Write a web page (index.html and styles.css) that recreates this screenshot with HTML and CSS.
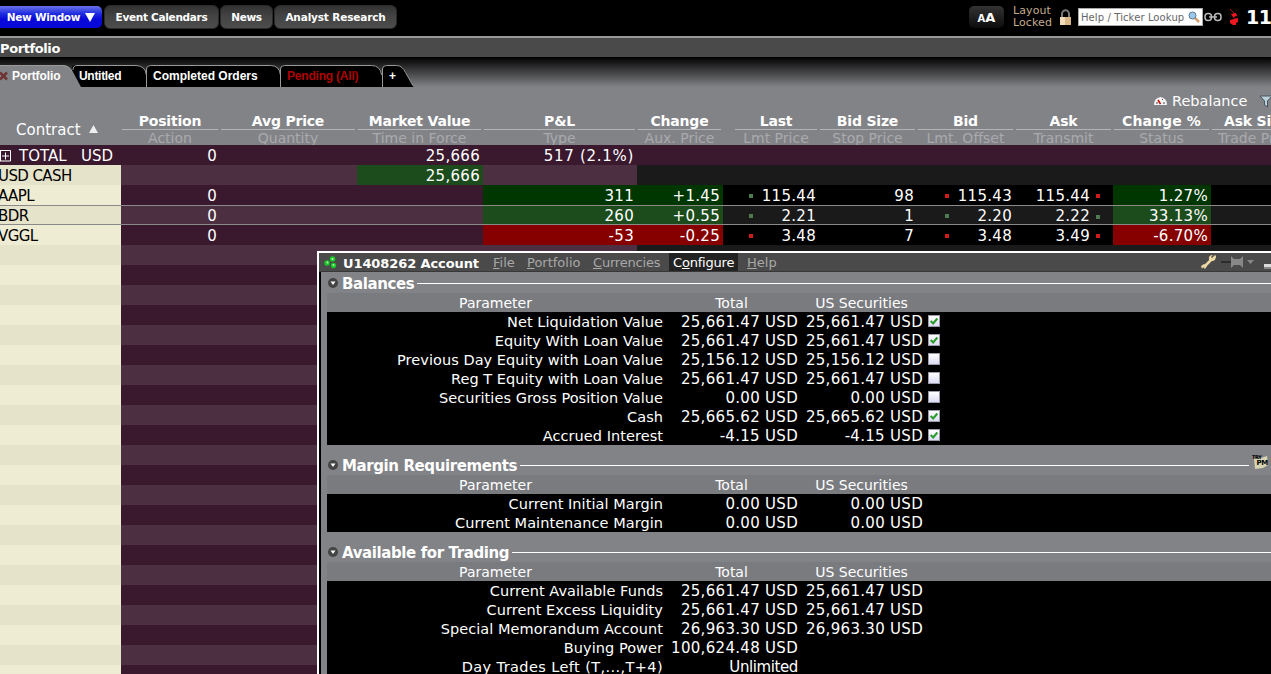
FILE: index.html
```html
<!DOCTYPE html>
<html lang="en">
<head>
    <meta charset="UTF-8">
    <title>Portfolio</title>
    <link rel="stylesheet" href="styles.css">
</head>
<body>
    <header class="toolbar">
        <div class="btn new-window">New Window
            <svg width="10" height="9" viewBox="0 0 10 9"><path d="M0 0h10L5 9z" fill="#fff"/></svg>
        </div>
        <div class="btn calendars">Event Calendars</div>
        <div class="btn news">News</div>
        <div class="btn research">Analyst Research</div>
        <div class="tools">
            <div class="font-size"><small>A</small>A</div>
            <div class="layout">Layout<br>Locked</div>
            <svg class="lock" width="13" height="17" viewBox="0 0 13 17">
                <path d="M3 9V5a3.5 3.8 0 0 1 7 0v4" fill="none" stroke="#777" stroke-width="2"/>
                <path d="M1 8h11v8H1z" fill="#d9b888"/><path d="M1 8h5v8H1z" fill="#f0dcb8"/>
            </svg>
            <div class="search"><span>Help / Ticker Lookup</span>
                <svg width="12" height="12" viewBox="0 0 12 12">
                    <path d="M6 6l5 5" stroke="#d8a070" stroke-width="2.5"/>
                    <circle cx="4.5" cy="4.5" r="3.5" fill="#9cc8ec" stroke="#5a7a96"/>
                </svg>
            </div>
            <svg class="chain" width="18" height="10" viewBox="0 0 18 10">
                <g fill="none" stroke="#bbb" stroke-width="1.5"><rect x="1" y="1.5" width="6.5" height="7" rx="3"/><rect x="10.5" y="1.5" width="6.5" height="7" rx="3"/><path d="M5 5h8"/></g>
            </svg>
            <svg class="phone" width="11" height="19" viewBox="0 0 11 19">
                <path d="M1 1l6 6-3 2 4 3" fill="none" stroke="#a01010"/>
                <path d="M2 6l5-1 1 3-4 1zM1 12l8-2v4l-2 1v2l-3 0-3-2z" fill="#f01820"/>
            </svg>
            <div class="clock">11</div>
        </div>
    </header>

    <div class="title">Portfolio</div>

    <nav class="tabs">
        <svg class="tab-shapes" width="416" height="22" viewBox="0 0 416 22">
            <path d="M383 22V3q0-3 3-3h11q6 1 9 8l8 14z"/>
            <path d="M281 22V3q0-3 3-3h88q9 0 10 10v12z"/>
            <path d="M147 22V3q0-3 3-3h120q9 0 10 10v12z"/>
            <path d="M72 22V3q0-3 3-3h61q9 0 10 10v12z"/>
            <path class="edge" d="M73 5q0-4.500 4-4.500h59q9 0 10.500 9.500M146.500 22V4q0-3.500 4-3.500h120q9 0 10 9.500M280.500 22V4q0-3.500 4-3.500h87q9 0 10 9.500M382.500 22V4q0-3.500 4-3.500h10q6 0 9 7l8 14"/>
            <path class="active" d="M0 0h64q6 1 9 7l8 15H0z"/>
            <path class="edge" d="M0 .5h64q5 .5 8 6"/>
            <path d="M0 7.500l7 7M7 7.500l-7 7" stroke="#6e3434" stroke-width="2.500"/>
        </svg>
        <span class="tab tab-portfolio">Portfolio</span>
        <span class="tab tab-untitled">Untitled</span>
        <span class="tab tab-completed">Completed Orders</span>
        <span class="tab tab-pending">Pending (All)</span>
        <span class="tab tab-add">+</span>
    </nav>

    <div class="actions">
        <svg width="13" height="8" viewBox="0 0 13 8"><path d="M0 8q0-7 6.500-8Q13 1 13 8z" fill="#f4f4f4"/><path d="M6.500 7L4 3" stroke="#c00" stroke-width="1.500"/><path d="M2 6h2M9 6h2M8 2l1 1" stroke="#444"/></svg>
        <span>Rebalance</span>
        <svg class="filter" width="14" height="13" viewBox="0 0 14 13"><path d="M1 1h12L8.500 6v6l-3-2V6z" fill="#bcd0dc" stroke="#46525c"/></svg>
    </div>

    <table class="quotes">
        <colgroup>
            <col class="w121"><col class="w99"><col class="w137"><col class="w126"><col class="w154"><col class="w86"><col class="w11"><col class="w85">
            <col class="w98"><col class="w98"><col class="w98"><col class="w98"><col class="w98">
        </colgroup>
        <thead>
            <tr>
                <th class="contract">Contract <svg width="9" height="8" viewBox="0 0 9 8"><path d="M4.500 0L9 8H0z" fill="#eee"/></svg></th>
                <th><b>Position</b><i>Action</i></th>
                <th><b>Avg Price</b><i>Quantity</i></th>
                <th><b>Market Value</b><i>Time in Force</i></th>
                <th><b>P&amp;L</b><i>Type</i></th>
                <th><b>Change</b><i>Aux. Price</i></th>
                <th></th>
                <th><b>Last</b><i>Lmt Price</i></th>
                <th><b>Bid Size</b><i>Stop Price</i></th>
                <th><b>Bid</b><i>Lmt. Offset</i></th>
                <th><b>Ask</b><i>Transmit</i></th>
                <th class="change-pct"><b>Change %</b><i>Status</i></th>
                <th class="ask-size"><b>Ask Size</b><i>Trade Price</i></th>
            </tr>
        </thead>
        <tbody>
            <tr class="total">
                <td class="name"><svg width="12" height="12" viewBox="0 0 12 12"><path d="M0 .5h10.500v10.500H0M.5 0v11M2 6h7M5.500 2.500v7" fill="none" stroke="#fff"/></svg><span>TOTAL</span><span>USD</span></td>
                <td>0</td><td></td><td>25,666</td><td class="sum">517 (2.1%)</td><td></td><td></td><td></td><td></td><td></td><td></td><td></td><td></td>
            </tr>
            <tr class="even">
                <td class="name">USD CASH</td>
                <td></td><td></td><td class="up">25,666</td><td></td><td></td><td></td><td></td><td></td><td></td><td></td><td></td><td></td>
            </tr>
            <tr class="odd">
                <td class="name">AAPL</td>
                <td>0</td><td></td><td></td><td class="up">311</td><td class="up">+1.45</td><td></td>
                <td class="last"><s class="g"></s>115.44</td><td>98</td><td class="bid"><s class="r"></s>115.43</td><td class="ask">115.44<s class="r"></s></td><td class="up">1.27%</td><td></td>
            </tr>
            <tr class="even selected">
                <td class="name">BDR</td>
                <td>0</td><td></td><td></td><td class="up">260</td><td class="up">+0.55</td><td></td>
                <td class="last"><s class="g"></s>2.21</td><td>1</td><td class="bid"><s class="g"></s>2.20</td><td class="ask">2.22<s class="g"></s></td><td class="up">33.13%</td><td></td>
            </tr>
            <tr class="odd">
                <td class="name">VGGL</td>
                <td>0</td><td></td><td></td><td class="down">-53</td><td class="down">-0.25</td><td></td>
                <td class="last"><s class="r"></s>3.48</td><td>7</td><td class="bid"><s class="r"></s>3.48</td><td class="ask">3.49<s class="r"></s></td><td class="down">-6.70%</td><td></td>
            </tr>
        </tbody>
    </table>

    <div class="empty-rows">
        <div class="stripes-name"></div>
        <div class="stripes-position"></div>
        <div class="stripes-market"></div>
    </div>

    <section class="account">
        <div class="menubar">
            <svg class="logo" width="13" height="13" viewBox="0 0 13 13"><g fill="#18c828"><circle cx="3" cy="7" r="2.700"/><circle cx="8.500" cy="3" r="2.800"/><circle cx="9.500" cy="9.500" r="2.700"/></g><g fill="#b8f8b0"><circle cx="3.500" cy="6.500" r="1"/><circle cx="8.500" cy="3" r="1"/><circle cx="9.500" cy="9" r="1"/></g></svg>
            <strong>U1408262 Account</strong>
            <span class="menu file"><u>F</u>ile</span>
            <span class="menu portfolio"><u>P</u>ortfolio</span>
            <span class="menu currencies"><u>C</u>urrencies</span>
            <span class="menu configure">C<u>o</u>nfigure</span>
            <span class="menu help"><u>H</u>elp</span>
            <svg class="window-icons" width="72" height="16" viewBox="0 0 72 16">
                <path d="M3 13l8-8" stroke="#ecd9a4" stroke-width="2.500"/>
                <path d="M14 1l-3 3-1-1 2-2q-5 0-4 5l3 1q4 0 4-5zM0 12l3-2 3 2-2 3-2-2-1 2z" fill="#ecd9a4"/>
                <path d="M20 8h10" stroke="#2c2c2c" stroke-width="2"/>
                <path d="M30 2l3 3h6l3-3v12l-3-3h-6l-3 3z" fill="#888"/>
                <path d="M46 6h7l-3.500 4z" fill="#888"/>
                <path d="M63 10h9v4h-9z" fill="#ddd"/><path d="M63 13h9v2h-9z" fill="#888"/>
            </svg>
        </div>

        <div class="content">
            <h2><svg width="10" height="10" viewBox="0 0 10 10"><circle cx="5" cy="5" r="5" fill="#444"/><path d="M2.500 3.500h5L5 7z" fill="#fff"/></svg><span>Balances</span></h2>
            <table class="values">
                <tr><th class="w337">Parameter</th><th class="w135">Total</th><th class="w125">US Securities</th><th></th></tr>
                <tr><td class="label">Net Liquidation Value</td><td>25,661.47 USD</td><td>25,661.47 USD</td><td class="check"><svg class="on" viewBox="0 0 12 12"><path d="M2 6l3 3 5-6"/></svg></td></tr>
                <tr><td class="label">Equity With Loan Value</td><td>25,661.47 USD</td><td>25,661.47 USD</td><td class="check"><svg class="on" viewBox="0 0 12 12"><path d="M2 6l3 3 5-6"/></svg></td></tr>
                <tr><td class="label">Previous Day Equity with Loan Value</td><td>25,156.12 USD</td><td>25,156.12 USD</td><td class="check"><svg viewBox="0 0 12 12"></svg></td></tr>
                <tr><td class="label">Reg T Equity with Loan Value</td><td>25,661.47 USD</td><td>25,661.47 USD</td><td class="check"><svg viewBox="0 0 12 12"></svg></td></tr>
                <tr><td class="label">Securities Gross Position Value</td><td>0.00 USD</td><td>0.00 USD</td><td class="check"><svg viewBox="0 0 12 12"></svg></td></tr>
                <tr><td class="label">Cash</td><td>25,665.62 USD</td><td>25,665.62 USD</td><td class="check"><svg class="on" viewBox="0 0 12 12"><path d="M2 6l3 3 5-6"/></svg></td></tr>
                <tr><td class="label">Accrued Interest</td><td>-4.15 USD</td><td>-4.15 USD</td><td class="check"><svg class="on" viewBox="0 0 12 12"><path d="M2 6l3 3 5-6"/></svg></td></tr>
            </table>

            <h2 class="margin-req"><svg width="10" height="10" viewBox="0 0 10 10"><circle cx="5" cy="5" r="5" fill="#444"/><path d="M2.500 3.500h5L5 7z" fill="#fff"/></svg><span>Margin Requirements</span>
                <em class="try-pm"><svg width="17" height="16" viewBox="0 0 17 16"><path d="M2 4l4 1 9-3 1 9-5 3-8 1z" fill="#d8d3b0"/><text x="0" y="4.500" class="try">TRY</text><text x="4.500" y="11" class="pm">PM</text></svg></em>
            </h2>
            <table class="values">
                <tr><th class="w337">Parameter</th><th class="w135">Total</th><th class="w125">US Securities</th><th></th></tr>
                <tr><td class="label">Current Initial Margin</td><td>0.00 USD</td><td>0.00 USD</td><td></td></tr>
                <tr><td class="label">Current Maintenance Margin</td><td>0.00 USD</td><td>0.00 USD</td><td></td></tr>
            </table>

            <h2 class="available"><svg width="10" height="10" viewBox="0 0 10 10"><circle cx="5" cy="5" r="5" fill="#444"/><path d="M2.500 3.500h5L5 7z" fill="#fff"/></svg><span>Available for Trading</span></h2>
            <table class="values">
                <tr><th class="w337">Parameter</th><th class="w135">Total</th><th class="w125">US Securities</th><th></th></tr>
                <tr><td class="label">Current Available Funds</td><td>25,661.47 USD</td><td>25,661.47 USD</td><td></td></tr>
                <tr><td class="label">Current Excess Liquidity</td><td>25,661.47 USD</td><td>25,661.47 USD</td><td></td></tr>
                <tr><td class="label">Special Memorandum Account</td><td>26,963.30 USD</td><td>26,963.30 USD</td><td></td></tr>
                <tr><td class="label">Buying Power</td><td>100,624.48 USD</td><td></td><td></td></tr>
                <tr><td class="label day-trades">Day Trades Left (T,...,T+4)</td><td class="unlimited">Unlimited</td><td></td><td></td></tr>
            </table>
        </div>
    </section>
</body>
</html>
```

FILE: styles.css
```css
* {
    margin: 0;
    padding: 0;
    box-sizing: border-box;
}

body {
    position: relative;
    width: 1271px;
    height: 674px;
    overflow: hidden;
    background-color: #828387;
    color: #fff;
    font-family: "DejaVu Sans", sans-serif;
    white-space: nowrap;
}

svg {
    display: block;
    flex: none;
}

/* top toolbar */
.toolbar {
    display: flex;
    align-items: flex-start;
    height: 38px;
    padding-top: 5px;
    background-color: #000;
    border-bottom: 2px solid #999;
}

.btn {
    display: flex;
    flex: none;
    align-items: center;
    justify-content: center;
    height: 24px;
    margin-right: 1px;
    border: 1px solid #2a2a2a;
    border-radius: 6px;
    background: linear-gradient(#333, #444 50%, #4d4d4d);
    font-size: 10.5px;
    font-weight: bold;
    letter-spacing: -.3px;
}

.new-window {
    gap: 5px;
    width: 102px;
    height: 22px;
    margin: 1px 2px 0 0;
    border: 0;
    border-radius: 0 5px 5px 0;
    background: linear-gradient(#6b72ea, #1f2ce0 35%, #0808d8 60%);
}

.calendars {
    width: 115px;
}

.news {
    width: 53px;
}

.research {
    width: 123px;
    letter-spacing: -.15px;
}

.tools {
    display: flex;
    flex: 1;
    align-items: flex-start;
    padding-left: 570px;
}

.tools > * {
    flex: none;
}

.font-size {
    width: 35px;
    height: 22px;
    margin: 1px 0 0 1px;
    border-radius: 5px;
    background: linear-gradient(#333, #0c0c0c);
    font-size: 13px;
    font-weight: bold;
    line-height: 24px;
    text-align: center;
}

.font-size small {
    font-size: 10px;
}

.layout {
    width: 44px;
    margin-left: 9px;
    color: #c5ab8c;
    font-size: 11px;
    line-height: 12px;
    letter-spacing: .1px;
}

.lock {
    margin: 4px 0 0 2px;
}

.search {
    display: flex;
    align-items: center;
    width: 125px;
    height: 18px;
    margin: 3px 0 0 6px;
    padding-left: 2px;
    border: 1px solid #aaa;
    background-color: #fff;
    color: #666;
    font-size: 10px;
    letter-spacing: .1px;
}

.search span {
    width: 107px;
}

.chain {
    margin: 7px 0 0 1px;
}

.phone {
    margin: 3px 0 0 7px;
}

.clock {
    margin-left: 6px;
    font-size: 19px;
    font-weight: bold;
    line-height: 24px;
    letter-spacing: -.5px;
}

.title {
    height: 19px;
    background-color: #4a4a4a;
    font-size: 13px;
    font-weight: bold;
    line-height: 21px;
    letter-spacing: -.4px;
}

/* page tabs */
.tabs {
    position: relative;
    display: flex;
    height: 30px;
    padding-top: 8px;
    background: linear-gradient(#000, #828387);
    font: bold 12px/22px "Liberation Sans", Arial, sans-serif;
}

.tab-shapes {
    position: absolute;
    left: 0;
    top: 8px;
}

.tab-shapes .edge {
    fill: none;
    stroke: #999;
}

.tab-shapes .active {
    fill: #828387;
}

.tab {
    position: relative;
}

.tab-portfolio {
    width: 79px;
    padding-left: 12px;
    letter-spacing: -.1px;
}

.tab-untitled {
    width: 74px;
    letter-spacing: -.3px;
}

.tab-completed {
    width: 134px;
}

.tab-pending {
    width: 102px;
    color: #b00000;
    letter-spacing: -.2px;
}

.actions {
    display: flex;
    align-items: center;
    height: 24px;
    padding: 4px 0 0 1154px;
    font-size: 14.5px;
}

.actions span {
    width: 76px;
    margin-left: 5px;
}

.filter {
    margin-left: 12px;
}

/* quote grid */
.quotes {
    width: 1309px;
    border-spacing: 0;
    table-layout: fixed;
    font-size: 15px;
}

.w121 { width: 121px; }
.w99 { width: 99px; }
.w137 { width: 137px; }
.w126 { width: 126px; }
.w154 { width: 154px; }
.w86 { width: 86px; }
.w11 { width: 11px; }
.w85 { width: 85px; }
.w98 { width: 98px; }

.quotes th {
    height: 34px;
    font-size: 14px;
    font-weight: normal;
    vertical-align: top;
}

.quotes th b,
.quotes th i {
    display: block;
    margin: 0 2px 0 1px;
    font-style: normal;
}

.quotes th b {
    height: 19px;
    border-bottom: 1px solid #b4b4b6;
    line-height: 21px;
    letter-spacing: -.2px;
}

.quotes th i {
    height: 15px;
    overflow: hidden;
    color: #a9aaad;
    line-height: 17px;
}

.quotes .change-pct b {
    letter-spacing: .1px;
}

.ask-size {
    text-align: left;
}

.ask-size b {
    padding-left: 12px;
}

.ask-size i {
    padding-left: 6px;
}

.quotes .contract {
    padding: 10px 0 0 16px;
    font-size: 15px;
    text-align: left;
}

.contract svg {
    display: inline-block;
    margin-left: 4px;
    vertical-align: 2px;
}

.quotes td {
    height: 20px;
    padding: 2px 3px 0 0;
    line-height: 18px;
    letter-spacing: .3px;
    text-align: right;
}

.total td {
    background-color: #3a182e;
}

.even td {
    background-color: #1a1a1a;
}

.odd td {
    background-color: #000;
}

.even td:nth-child(-n+5) {
    background-color: #4d2f42;
}

.odd td:nth-child(-n+5) {
    background-color: #3a182e;
}

.quotes .selected td {
    border-top: 1px solid #8a8a8a;
    border-bottom: 1px solid #8a8a8a;
    line-height: 16px;
}

.quotes .total .sum {
    letter-spacing: .7px;
}

.quotes td.name {
    color: #000;
    letter-spacing: -.6px;
    text-align: left;
    text-indent: -2px;
}

.even td.name {
    background-color: #e5e3c9;
}

.odd td.name {
    background-color: #eeecd3;
}

.quotes .total td.name {
    display: flex;
    align-items: center;
    color: #fff;
    letter-spacing: 0;
    text-indent: 0;
}

.total span {
    flex: none;
    width: 62px;
    margin-left: 7px;
}

.total span + span {
    width: 34px;
    margin-left: 0;
}

.even td.up {
    background-color: #1c4c1c;
}

.odd td.up {
    background-color: #003600;
}

.odd td.down {
    background-color: #860000;
}

.quotes s {
    float: left;
    width: 4px;
    height: 4px;
    margin-top: 7px;
}

.selected s {
    margin-top: 6px;
}

.last s {
    margin-left: 15px;
}

.bid s {
    margin-left: 28px;
}

.ask s {
    float: right;
    margin: 7px 10px 0 6px;
}

.g {
    background-color: #4c7c50;
}

.r {
    background-color: #d01c1c;
}

.empty-rows {
    display: flex;
    height: 429px;
}

.stripes-name {
    width: 121px;
    background: repeating-linear-gradient(#e5e3c9 0 20px, #eeecd3 20px 40px);
}

.stripes-position {
    width: 516px;
    background: repeating-linear-gradient(#4d2f42 0 20px, #3a182e 20px 40px);
}

.stripes-market {
    flex: 1;
    background: repeating-linear-gradient(#1a1a1a 0 20px, #000 20px 40px);
}

/* floating account window */
.account {
    position: absolute;
    left: 317px;
    top: 251px;
    width: 954px;
    height: 423px;
    overflow: hidden;
    border-top: 2px solid #fff;
    border-left: 2px solid #fff;
    background-color: #000;
}

.menubar {
    display: flex;
    height: 19px;
    padding-left: 5px;
    border-bottom: 1px solid #383838;
    background-color: #4a4a4a;
    font-size: 13px;
    line-height: 19px;
}

.menubar > * {
    flex: none;
}

.logo {
    margin: 3px 6px 0 0;
}

.menubar strong {
    width: 150px;
    line-height: 21px;
    letter-spacing: -.1px;
}

.menu {
    color: #a8a8a8;
}

.file {
    width: 34px;
}

.portfolio {
    width: 66px;
}

.currencies {
    width: 76px;
    letter-spacing: -.2px;
}

.configure {
    width: 69px;
    padding-left: 4px;
    background-color: #222;
    color: #fff;
    letter-spacing: -.2px;
}

.help {
    margin-left: 9px;
    width: 454px;
}

.window-icons {
    margin-top: 1px;
}

.content {
    height: 402px;
    margin-left: 2px;
    padding-left: 6px;
    background-color: #828387;
}

h2 {
    display: flex;
    align-items: center;
    height: 21px;
    padding: 2px 0 0 1px;
    font-size: 15px;
    letter-spacing: -.4px;
}

h2 svg {
    margin-top: -1px;
}

h2 span {
    margin: 0 3px 0 4px;
}

h2::after {
    content: "";
    flex: 1;
    height: 1px;
    background-color: #fff;
}

.margin-req,
.available {
    height: 30px;
    padding-top: 11px;
}

.try-pm {
    order: 2;
    margin: -7px 2px 0 3px;
}

.try {
    font: bold 5px "DejaVu Sans", sans-serif;
}

.pm {
    font: bold 7px "DejaVu Sans", sans-serif;
}

.values {
    width: 100%;
    border-spacing: 0;
    table-layout: fixed;
    background-color: #000;
    font-size: 15px;
}

.values th {
    height: 19px;
    padding-top: 1px;
    background-color: #7a7b7f;
    font-size: 14px;
    font-weight: normal;
    line-height: 18px;
}

.w337 { width: 337px; }
.w135 { width: 135px; }
.w125 { width: 125px; }

.values td {
    height: 19px;
    padding: 1px 1px 0 0;
    line-height: 18px;
    letter-spacing: .3px;
    text-align: right;
}

.values .label {
    font-size: 14.5px;
    letter-spacing: .05px;
}

.values .day-trades {
    letter-spacing: .4px;
}

.values .unlimited {
    letter-spacing: -.4px;
}

.check svg {
    width: 12px;
    height: 12px;
    margin: -2px 0 0 4px;
    border: 1px solid #9a9aa8;
    background: linear-gradient(#fff, #dcdcf4);
}

.check path {
    fill: none;
    stroke: #2a9c2a;
    stroke-width: 2.5;
}
```
